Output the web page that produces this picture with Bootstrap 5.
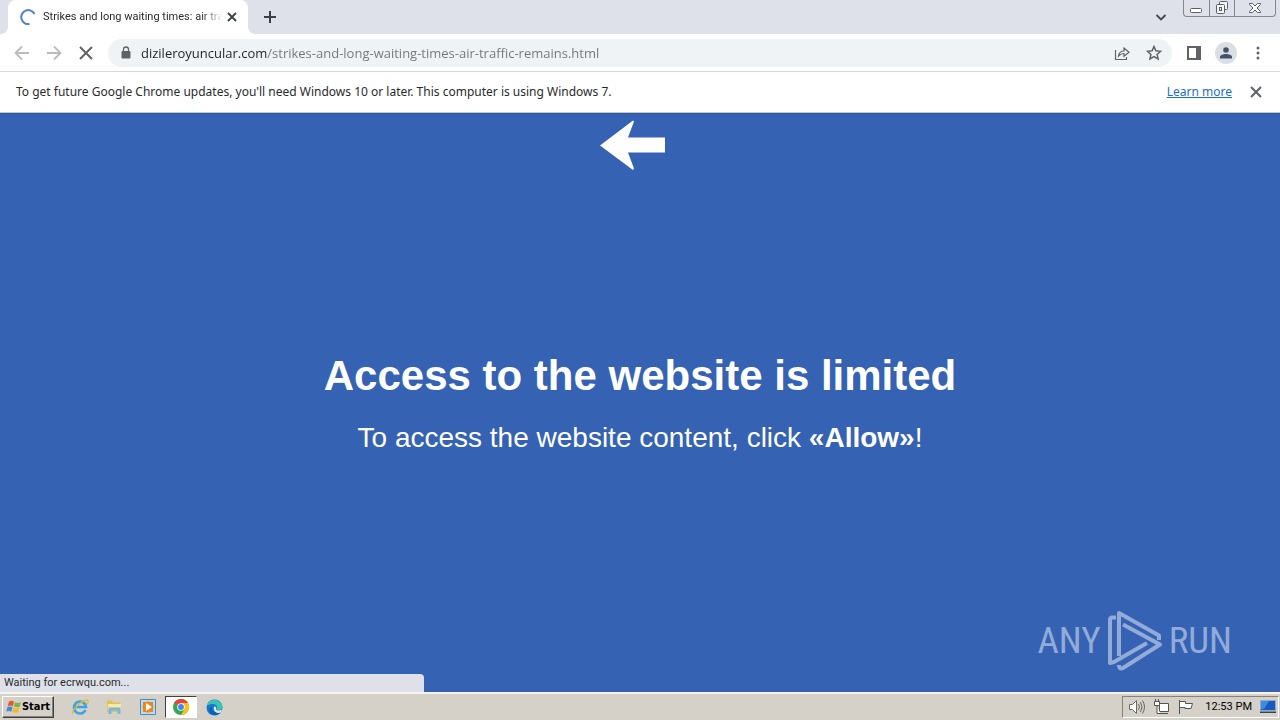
<!DOCTYPE html>
<html lang="en">
<head>
<meta charset="utf-8">
<meta name="viewport" content="width=device-width, initial-scale=1">
<title>Strikes and long waiting times: air traffic remains</title>
<link href="https://cdn.jsdelivr.net/npm/bootstrap@5.3.0/dist/css/bootstrap.min.css" rel="stylesheet">
<style>
body { font-family: "Noto Sans", "Open Sans", sans-serif; font-size: 12px; line-height: 16px; color: #292a2d; }
button { padding: 0; border: 0; background: none; color: inherit; display: flex; align-items: center; justify-content: center; }
svg { display: block; flex: none; }
.tabstrip { background: #dee1e9; height: 34px; padding-left: 8px; }
.tab-active { width: 240px; background: #fff; border-radius: 8px 8px 0 0; padding: 0 8px 0 12px; position: relative; }
.tab-active::before, .tab-active::after { content: ""; position: absolute; bottom: 0; width: 8px; height: 8px; }
.tab-active::before { left: -8px; background: radial-gradient(circle at 0 0, transparent 8px, #fff 8px); }
.tab-active::after { right: -8px; background: radial-gradient(circle at 100% 0, transparent 8px, #fff 8px); }
.tab-title { font-family: Roboto, sans-serif; font-size: 11px; margin-left: 7px; -webkit-mask-image: linear-gradient(90deg, #000 88%, transparent); mask-image: linear-gradient(90deg, #000 88%, transparent); }
.window-controls { height: 17px; width: 93px; border: 1px solid #84878f; border-top: 0; border-radius: 0 0 4px 4px; margin-right: 4px; }
.window-controls button { width: 25px; }
.window-controls button + button { border-left: 1px solid #84878f; }
.toolbar { height: 38px; border-bottom: 1px solid #d5d7db; color: #5f6368; padding: 0 10px; }
.toolbar button { width: 24px; height: 24px; }
.omnibox { height: 28px; border-radius: 14px; background: #f0f3f5; margin: 0 10px; padding: 0 6px 0 12px; }
.omnibox input { font-family: "Open Sans", sans-serif; font-size: 13px; line-height: 20px; border: 0; outline: 0; padding: 0; margin-left: 9px; min-width: 0; color: transparent; caret-color: #202124; background: linear-gradient(90deg, #202124 126px, #70757a 126px); -webkit-background-clip: text; background-clip: text; }
.avatar { width: 22px; height: 22px; border-radius: 50%; background: #dadfe6; }
.infobar { height: 41px; border-bottom: 1px solid #b9c7df; padding: 0 16px; }
.infobar a { color: #1a6fc4; }
.page { background: #3562b2; color: #fff; font-family: "Liberation Sans", Arial, sans-serif; border-top: 1px solid #36598f; }
.page h1 { font-size: 42px; line-height: 48px; font-weight: 700; margin: 0 0 22px; }
.page p { font-size: 28px; line-height: 32px; margin: 0; }
.hint-arrow { position: absolute; top: 5px; left: 50%; margin-left: -40px; }
.watermark { position: absolute; right: 48px; bottom: 20px; color: #92abd9; font-family: "Roboto Condensed", "Liberation Sans", sans-serif; font-size: 37px; line-height: 62px; gap: 6px; }
.status-bubble { position: absolute; left: 0; bottom: 0; width: 424px; height: 18px; background: #dee1e9; color: #292a2d; border-radius: 0 4px 0 0; padding-left: 4px; font: 11px/18px Roboto, sans-serif; }
.taskbar { height: 28px; background: #d5d0c8; border-top: 2px solid #f5f4f1; color: #000; padding: 0 1px 0 2px; font-family: Roboto, sans-serif; font-size: 11px; }
.start-btn { width: 52px; height: 22px; border: 1px solid; border-color: #fff #404040 #404040 #fff; box-shadow: inset -1px -1px #85827c; font-family: "DejaVu Sans Condensed", "Noto Sans", sans-serif; font-weight: 700; }
.quick { margin-left: 9px; }
.quick button { width: 34px; height: 24px; }
.quick .running { background: #fff; width: 32px; height: 22px; border: 1px solid; border-color: #404040 #fff #fff #404040; }
.tray { height: 22px; border: 1px solid; border-color: #85827c #fff #fff #85827c; padding: 0 2px 0 5px; width: 157px; }
</style>
</head>
<body class="d-flex flex-column min-vh-100">
<header>
  <div class="tabstrip d-flex">
    <div class="tab-active d-flex align-items-center">
      <svg width="16" height="16" viewBox="0 0 16 16" fill="none" stroke="#4b82d8" stroke-width="2"><path d="M14.500 5A7 7 0 1 0 9.500 15"/></svg>
      <span class="tab-title text-nowrap">Strikes and long waiting times: air tra</span>
      <button class="ms-auto" aria-label="Close tab"><svg width="16" height="16" viewBox="0 0 16 16" stroke="#3c4043" stroke-width="1.800"><path d="M4 4l8 8M12 4l-8 8"/></svg></button>
    </div>
    <button class="ms-3" aria-label="New tab"><svg width="12" height="12" viewBox="0 0 12 12" stroke="#3c4043" stroke-width="2"><path d="M6 0v12M0 6h12"/></svg></button>
    <button class="ms-auto me-3" aria-label="Search tabs"><svg width="12" height="12" viewBox="0 0 12 12" fill="none" stroke="#44474b" stroke-width="1.800"><path d="M1.500 4L6 8.500 10.500 4"/></svg></button>
    <div class="window-controls d-flex">
      <button aria-label="Minimize"><svg width="13" height="12" viewBox="0 0 13 12" fill="#fff" stroke="#5a5d63"><rect x=".5" y="6.500" width="11" height="4" rx="1"/></svg></button>
      <button aria-label="Restore"><svg width="14" height="14" viewBox="0 0 14 14" fill="#f4f5f7" stroke="#5a5d63"><rect x="4.500" y=".5" width="8" height="8" rx="1"/><rect x="1.500" y="3.500" width="8" height="9" rx="1"/><rect x="4.500" y="6.500" width="2" height="3"/></svg></button>
      <button class="flex-fill" aria-label="Close"><svg width="14" height="12" viewBox="0 0 14 12" fill="#fff" stroke="#5a5d63"><path d="M1.500 1.500h3L7 4l2.500-2.500h3v1L9 6l3.500 3.500v1h-3L7 8l-2.500 2.500h-3v-1L5 6 1.500 2.500z"/></svg></button>
    </div>
  </div>
  <div class="toolbar d-flex align-items-center">
    <div class="d-flex gap-2">
      <button aria-label="Back"><svg width="16" height="16" viewBox="0 0 16 16" fill="none" stroke="#b9bbbe" stroke-width="1.800"><path d="M15 8H2M8 1.500L1.500 8 8 14.500"/></svg></button>
      <button aria-label="Forward"><svg width="16" height="16" viewBox="0 0 16 16" fill="none" stroke="#b9bbbe" stroke-width="1.800"><path d="M1 8h13M8 1.500L14.500 8 8 14.500"/></svg></button>
      <button aria-label="Stop"><svg width="14" height="14" viewBox="0 0 14 14" stroke="#5f6368" stroke-width="2"><path d="M1 1l12 12M13 1L1 13"/></svg></button>
    </div>
    <div class="omnibox d-flex align-items-center flex-grow-1">
      <svg width="12" height="14" viewBox="0 0 12 14"><rect x="1.500" y="5" width="9" height="7.500" rx="1" fill="#5f6368"/><path d="M3.500 5.500V3.500a2.500 2.500 0 0 1 5 0v2" fill="none" stroke="#5f6368" stroke-width="1.300"/></svg>
      <input type="text" class="flex-grow-1" aria-label="Address" value="dizileroyuncular.com/strikes-and-long-waiting-times-air-traffic-remains.html">
      <button class="me-2" aria-label="Share"><svg width="16" height="16" viewBox="0 0 16 16" fill="none" stroke="#5f6368" stroke-width="1.200"><path d="M1.500 5v9.500h11V12M4.500 11c.5-3.500 2.500-5 5.500-5V3l5 4.200-5 4V8.500c-2.500 0-4 .8-5.500 2.500z"/></svg></button>
      <button aria-label="Bookmark"><svg width="16" height="16" viewBox="0 0 16 16" fill="none" stroke="#5f6368" stroke-width="1.500"><path d="M8 1.500l1.900 4.300 4.700.5-3.500 3.100 1 4.600L8 11.600 3.900 14l1-4.600L1.400 6.300l4.700-.5z"/></svg></button>
    </div>
    <button class="me-2" aria-label="Side panel"><svg width="14" height="14" viewBox="0 0 14 14"><path d="M1 1h12v12H1z" fill="none" stroke="#5f6368" stroke-width="2"/><path d="M9 1h5v12H9z" fill="#5f6368"/></svg></button>
    <button aria-label="Profile"><span class="avatar d-flex align-items-center justify-content-center"><svg width="12" height="12" viewBox="0 0 12 12" fill="#46526a"><circle cx="6" cy="3" r="2.800"/><path d="M0 11.500V10c0-2 3-3 6-3s6 1 6 3v1.500z"/></svg></span></button>
    <button class="ms-2" aria-label="Menu"><svg width="4" height="14" viewBox="0 0 4 14" fill="#5f6368"><circle cx="2" cy="2" r="1.500"/><circle cx="2" cy="7" r="1.500"/><circle cx="2" cy="12" r="1.500"/></svg></button>
  </div>
  <div class="infobar d-flex align-items-center">
    <span>To get future Google Chrome updates, you'll need Windows 10 or later. This computer is using Windows 7.</span>
    <a href="#" class="ms-auto">Learn more</a>
    <button class="ms-3" aria-label="Dismiss"><svg width="16" height="16" viewBox="0 0 16 16" stroke="#5f6368" stroke-width="2"><path d="M3 3l10 10M13 3L3 13"/></svg></button>
  </div>
</header>
<main class="page flex-grow-1 position-relative d-flex flex-column align-items-center justify-content-center text-center">
  <svg class="hint-arrow" width="66" height="52" viewBox="0 0 66 52" fill="#fff"><path d="M0 26.500L33 1.500l1 1-6 16h37v15H28l6 16-1 1.500z"/></svg>
  <h1>Access to the website is limited</h1>
  <p>To access the website content, click <b>«Allow»</b>!</p>
  <div class="watermark d-flex align-items-center">
    <span>ANY</span>
    <svg width="56" height="62" viewBox="0 0 56 62" fill="none" stroke="#92abd9" stroke-width="4" stroke-linejoin="round"><path d="M9 7.500L5 7.500Q3 8 3 10V53L7 52 40 33M12 46V3L52 25.500V30M16 14.500L53 34.500 16 58Q12 60 12 55"/></svg>
    <span>RUN</span>
  </div>
  <div class="status-bubble text-start">Waiting for ecrwqu.com...</div>
</main>
<footer class="taskbar d-flex align-items-center">
  <button class="start-btn"><svg width="16" height="16" viewBox="0 0 16 16"><path d="M3 2.500c2-1 3.500-.8 5 .2L6.800 7.200C5.200 6.300 3.800 6.200 1.800 7z" fill="#e5572b"/><path d="M9 3.200c2 1 3.600.9 6 0L13.700 7.700c-2 .9-3.800.8-5.800-.1z" fill="#7bb742"/><path d="M1.500 8c2-.9 3.500-.7 5 .2L5.300 12.700c-1.600-1-3-1-5-.2z" fill="#3d8be0"/><path d="M7.600 8.700c2 1 3.600.9 5.900 0l-1.300 4.500c-2 .9-3.800.8-5.800-.1z" fill="#f5b921"/></svg>Start</button>
  <nav class="quick d-flex align-items-center" aria-label="Quick launch">
    <button aria-label="Internet Explorer"><svg width="18" height="18" viewBox="0 0 18 18" fill="none"><path d="M14.500 12A6 6 0 1 1 15 9H4" stroke="#3ba5e3" stroke-width="2.600"/><path d="M2 16C-1 13 11 2 16 2c2 0 1 3 0 4" stroke="#e9b832" stroke-width="1.300"/></svg></button>
    <button aria-label="File Explorer"><svg width="16" height="16" viewBox="0 0 16 16"><path d="M1 1.500h5l1 2h7.500V13H1z" fill="#e5c055"/><path d="M2 5h13v6H2z" fill="#f8e8a0"/><path d="M2.500 15V8.500h12V15h-3v-3.500h-6V15z" fill="#78b8de"/></svg></button>
    <button aria-label="Media Player"><svg width="16" height="16" viewBox="0 0 16 16"><path d="M.5.500h15v15H.5z" fill="#b9dcf2" stroke="#3f8fc4"/><path d="M3 3h10v10H3z" fill="#f28516"/><circle cx="8" cy="8" r="5.500" fill="#f28516"/><path d="M6 4L12 8 6 12z" fill="#fff"/></svg></button>
    <button class="running" aria-label="Google Chrome"><svg width="16" height="16" viewBox="0 0 16 16"><circle cx="8" cy="8" r="8" fill="#34a853"/><path d="M8 8L1.100 4A8 8 0 0 1 15 4z" fill="#ea4335"/><path d="M8 4h7a8 8 0 0 1-7 12l3.500-6z" fill="#fbc116"/><circle cx="8" cy="8" r="3.800" fill="#fff"/><circle cx="8" cy="8" r="2.900" fill="#4285f4"/></svg></button>
    <button aria-label="Microsoft Edge"><svg width="17" height="17" viewBox="0 0 17 17"><circle cx="8.500" cy="8.500" r="8" fill="#1677cd"/><path d="M.7 7C2-1 15-1 16.500 7c.5 4-5 5-6 3 2-3-1-5-4-5-3 0-5 1-5.800 2z" fill="#38c5b3"/><path d="M6 8c-1 4 3 6 8.500 5-3 4.500-10 4-11-1C3 9 4 8 6 8z" fill="#0c5fb5"/><path d="M8 7.500c1.500-.5 3 1 2 2.500.5 2 3.500 2 6 .5l-1 3c-3.500 1.500-8.500-.5-7-6z" fill="#dfeaf0"/></svg></button>
  </nav>
  <div class="tray ms-auto d-flex align-items-center">
    <svg width="18" height="16" viewBox="0 0 18 16" fill="none" stroke="#6a6864"><path d="M1.500 5.500h3l4-4v13l-4-4h-3z" fill="#fff"/><path d="M10.500 5q2 3 0 6M12.500 3q3 5 0 10M14.500 1.500q4 6.500 0 13"/></svg>
    <svg class="ms-2" width="16" height="16" viewBox="0 0 16 16" fill="#fff" stroke="#55534f"><path d="M5.500 4.500h9v8h-9zM6 14.500h8"/><path d="M.5 2.500h5v4h-5zM1.500 2V0M4.500 2V0M3 6.500v8h3"/></svg>
    <svg class="ms-2" width="16" height="16" viewBox="0 0 16 16" fill="#fff" stroke="#55534f"><path d="M1.500 1v14"/><path d="M1.500 2.500h6v2h7l-1.500 5H7v-1H1.500z"/></svg>
    <span class="ms-auto me-2 text-nowrap">12:53 PM</span>
    <svg width="16" height="14" viewBox="0 0 16 14"><path d="M.5.500h15v10H.5z" fill="#1859bf" stroke="#8eabc9"/><path d="M1 1h8L4 9H1z" fill="#3b8be2"/><path d="M0 11.500h16V13H0z" fill="#34434e"/></svg>
  </div>
</footer>
<script src="https://cdn.jsdelivr.net/npm/bootstrap@5.3.0/dist/js/bootstrap.bundle.min.js"></script>
</body>
</html>
